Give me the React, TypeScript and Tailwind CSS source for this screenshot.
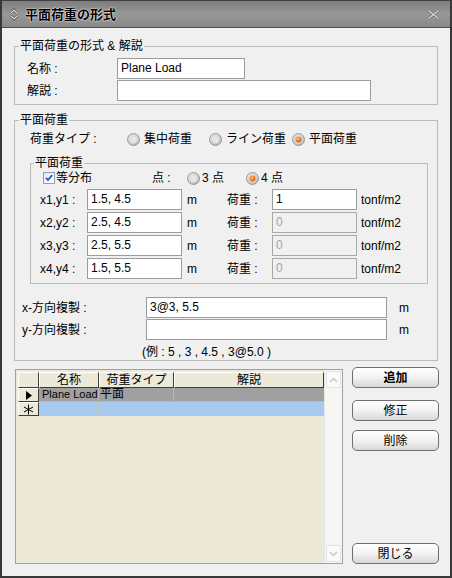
import React from 'react';

const Radio = ({ checked }: { checked?: boolean }) => (
  <svg width="13" height="13" viewBox="0 0 13 13" className="shrink-0">
    <defs>
      <radialGradient id="rbg" cx="0.4" cy="0.35" r="0.7">
        <stop offset="0" stopColor="#f4f4f4" />
        <stop offset="0.6" stopColor="#d6d6d6" />
        <stop offset="1" stopColor="#a9a9a9" />
      </radialGradient>
      <radialGradient id="rdot" cx="0.4" cy="0.35" r="0.7">
        <stop offset="0" stopColor="#ffc080" />
        <stop offset="0.6" stopColor="#f47a22" />
        <stop offset="1" stopColor="#d04a00" />
      </radialGradient>
    </defs>
    <circle cx="6.5" cy="6.5" r="6" fill="url(#rbg)" stroke="#9a9a9a" strokeWidth="1" />
    <circle cx="6.5" cy="6.5" r="4" fill="#e6e6e6" stroke="#c4c4c4" strokeWidth="0.6" />
    {checked && <circle cx="6.5" cy="6.5" r="3" fill="url(#rdot)" />}
  </svg>
);

const Checkbox = () => (
  <svg width="12" height="12" viewBox="0 0 12 12" className="shrink-0">
    <defs>
      <linearGradient id="cbg" x1="0" y1="0" x2="1" y2="1">
        <stop offset="0" stopColor="#dfe6ee" />
        <stop offset="1" stopColor="#ffffff" />
      </linearGradient>
    </defs>
    <rect x="0.5" y="0.5" width="11" height="11" fill="url(#cbg)" stroke="#8a9fb8" />
    <path d="M3 5.8 L5 8 L9.2 3.2" fill="none" stroke="#2a52be" strokeWidth="1.8" />
  </svg>
);

const Field = ({ className, value, disabled }: { className: string; value?: string; disabled?: boolean }) => (
  <div
    className={
      'h-[21px] shrink-0 border pl-[3px] leading-[19px] text-[12px] whitespace-nowrap overflow-hidden ' +
      (disabled ? 'bg-[#f0f0f0] border-[#a8a8a8] text-[#a3a3a3] ' : 'bg-white border-[#9c9c9c] text-black ') +
      className
    }
  >
    {value}
  </div>
);

const Btn = ({ label, bold, className }: { label: string; bold?: boolean; className?: string }) => (
  <div
    className={
      'h-[21px] w-[87px] rounded-[5px] border border-[#6f6f6f] bg-gradient-to-b from-[#ffffff] via-[#f2f2f2] to-[#d8d8d8] flex items-center justify-center text-[12px] leading-none ' +
      (bold ? 'font-bold ' : '') +
      (className || '')
    }
  >
    {label}
  </div>
);

const rows = [
  { l: 'x1,y1 :', v: '1.5, 4.5', w: '1', en: true },
  { l: 'x2,y2 :', v: '2.5, 4.5', w: '0', en: false },
  { l: 'x3,y3 :', v: '2.5, 5.5', w: '0', en: false },
  { l: 'x4,y4 :', v: '1.5, 5.5', w: '0', en: false },
];

const hcell =
  'h-full flex items-center justify-center border-t border-l border-r border-b border-t-white border-l-white border-r-[#3c3c3c] border-b-[#3c3c3c] bg-[#ece9d8] leading-none';

export default function App() {
  return (
    <div className="w-[452px] h-[578px] flex flex-col bg-[#f0f0f0] border-x-2 border-b-2 border-[#383838] [font-family:'Liberation_Sans','Noto_Sans_CJK_JP',sans-serif] text-[12px] text-black overflow-hidden">
      {/* Title bar */}
      <div className="h-[28px] shrink-0 flex items-center border-t border-b border-t-[#404040] border-b-[#505050] bg-gradient-to-b from-[#7e7e7e] via-[#979797] to-[#8a8a8a] pl-[8px] pr-[10px]">
        <svg width="8" height="13" viewBox="0 0 8 13">
          <path d="M1 5 L4 2 L7 5" fill="none" stroke="#3a3a3a" strokeWidth="2.4" />
          <path d="M1 5 L4 2 L7 5" fill="none" stroke="#e8e8e8" strokeWidth="1.2" />
          <path d="M1 8 L4 11 L7 8" fill="none" stroke="#3a3a3a" strokeWidth="2.4" />
          <path d="M1 8 L4 11 L7 8" fill="none" stroke="#e8e8e8" strokeWidth="1.2" />
        </svg>
        <span className="ml-[7px] text-[13px] font-bold text-black leading-none [text-shadow:0_0_2px_#ffffff,0_0_1px_#ffffff]">
          平面荷重の形式
        </span>
        <svg className="ml-auto" width="13" height="11" viewBox="0 0 13 11">
          <path d="M1.5 1.5 L11.5 9.5 M11.5 1.5 L1.5 9.5" stroke="#6a6a6a" strokeWidth="2.6" />
          <path d="M1.5 1.5 L11.5 9.5 M11.5 1.5 L1.5 9.5" stroke="#d8d8d8" strokeWidth="1.4" />
        </svg>
      </div>

      {/* Content */}
      <div className="flex-1 flex flex-col px-[12px]">
        {/* Group 1 */}
        <fieldset className="mt-[11px] w-[424px] border border-[#bcbcbc]">
          <legend className="ml-[4px] px-[1px] leading-[14px]">平面荷重の形式 &amp; 解説</legend>
          <div className="pl-[12px] pt-[5px] pb-[3px] flex flex-col gap-[1px]">
            <div className="flex items-center h-[21px]">
              <span className="w-[90px] shrink-0">名称 :</span>
              <Field className="w-[128px] [font-size:11px]" value="Plane Load" />
            </div>
            <div className="flex items-center h-[21px]">
              <span className="w-[90px] shrink-0">解説 :</span>
              <Field className="w-[254px]" />
            </div>
          </div>
        </fieldset>

        {/* Group 2 */}
        <fieldset className="mt-[8px] w-[424px] border border-[#bcbcbc]">
          <legend className="ml-[4px] px-[1px] leading-[14px]">平面荷重</legend>
          <div className="pl-[7px] pt-[2px] pb-[1px] flex flex-col">
            <div className="pl-[8px] h-[20px] flex items-center">
              <span className="w-[97px] shrink-0">荷重タイプ :</span>
              <div className="w-[82px] flex items-center gap-[4px]">
                <Radio />
                <span>集中荷重</span>
              </div>
              <div className="w-[83px] flex items-center gap-[4px]">
                <Radio />
                <span>ライン荷重</span>
              </div>
              <div className="flex items-center gap-[4px]">
                <Radio checked />
                <span>平面荷重</span>
              </div>
            </div>

            {/* Inner group */}
            <fieldset className="ml-[8px] mt-[7px] w-[398px] border border-[#bcbcbc]">
              <legend className="ml-[3px] px-[1px] leading-[14px]">平面荷重</legend>
              <div className="pl-[9px] pb-[4px] flex flex-col">
                <div className="h-[16px] flex items-center">
                  <div className="ml-[3px] w-[109px] flex items-center gap-[1px]">
                    <Checkbox />
                    <span>等分布</span>
                  </div>
                  <span className="w-[35px]">点 :</span>
                  <div className="w-[59px] flex items-center gap-[2px]">
                    <Radio />
                    <span>3 点</span>
                  </div>
                  <div className="flex items-center gap-[2px]">
                    <Radio checked />
                    <span>4 点</span>
                  </div>
                </div>
                <div className="mt-[3px] flex flex-col gap-[2px]">
                  {rows.map((r) => (
                    <div key={r.l} className="h-[21px] flex items-center">
                      <span className="w-[47px] shrink-0">{r.l}</span>
                      <Field className="w-[95px] pl-[2px]" value={r.v} />
                      <span className="w-[45px] shrink-0 pl-[5px]">m</span>
                      <span className="w-[45px] shrink-0">荷重 :</span>
                      <Field className="w-[85px] pl-[2px]" value={r.w} disabled={!r.en} />
                      <span className="pl-[4px]">tonf/m2</span>
                    </div>
                  ))}
                </div>
              </div>
            </fieldset>

            <div className="mt-[13px] flex flex-col gap-[1px]">
              <div className="h-[21px] flex items-center">
                <span className="w-[124px] shrink-0">x-方向複製 :</span>
                <Field className="w-[241px] pl-[2px]" value="3@3, 5.5" />
                <span className="pl-[12px]">m</span>
              </div>
              <div className="h-[21px] flex items-center">
                <span className="w-[124px] shrink-0">y-方向複製 :</span>
                <Field className="w-[241px]" />
                <span className="pl-[12px]">m</span>
              </div>
            </div>
            <div className="mt-[5px] pl-[120px] leading-[14px]">(例 : 5 , 3 , 4.5 , 3@5.0 )</div>
          </div>
        </fieldset>

        {/* Bottom: grid + buttons */}
        <div className="mt-[6px] flex items-start">
          <div className="ml-[1px] mt-[2px] w-[329px] h-[195px] border border-[#a0a0a0] bg-[#ece9d8] flex">
            <div className="pl-[2px] pt-[2px] flex flex-col">
              {/* header */}
              <div className="flex h-[16px]">
                <div className={hcell + ' w-[21px]'} />
                <div className={hcell + ' w-[60px]'}>名称</div>
                <div className={hcell + ' w-[75px]'}>荷重タイプ</div>
                <div className={hcell + ' w-[150px]'}>解説</div>
              </div>
              {/* row 1 */}
              <div className="flex h-[14px]">
                <div className={hcell + ' w-[21px]'}>
                  <svg width="7" height="9" viewBox="0 0 7 9">
                    <path d="M1 0 L7 4.5 L1 9 Z" fill="#000" />
                  </svg>
                </div>
                <div className="w-[60px] h-full bg-[#a0a0a0] border-r border-b border-[#b8b8b8] pl-[3px] leading-[13px] text-[11px] whitespace-nowrap overflow-hidden">
                  Plane Load
                </div>
                <div className="w-[75px] h-full bg-[#a0a0a0] border-r border-b border-[#b8b8b8] pl-[1px] leading-[13px]">
                  平面
                </div>
                <div className="w-[150px] h-full bg-[#a0a0a0] border-b border-[#b8b8b8]" />
              </div>
              {/* row 2 */}
              <div className="flex h-[14px]">
                <div className={hcell + ' w-[21px]'}>
                  <svg width="11" height="11" viewBox="0 0 11 11">
                    <path d="M5.5 0.5 V10.5 M1 3 L10 8 M10 3 L1 8" stroke="#000" strokeWidth="1" />
                  </svg>
                </div>
                <div className="w-[60px] h-full bg-[#a6caf0] border-r border-b border-[#c4c4b0]" />
                <div className="w-[75px] h-full bg-[#a6caf0] border-r border-b border-[#c4c4b0]" />
                <div className="w-[150px] h-full bg-[#a6caf0] border-b border-[#c4c4b0]" />
              </div>
            </div>
            {/* scrollbar */}
            <div className="ml-auto w-[18px] h-full bg-[#f6f6f4] border-l border-[#e6e6e6] flex flex-col justify-between py-[1px]">
              <div className="h-[17px] mx-[1px] rounded-[2px] border border-[#e2e2e2] bg-[#fafafa] flex items-center justify-center">
                <svg width="9" height="6" viewBox="0 0 9 6">
                  <path d="M1 5 L4.5 1.5 L8 5" fill="none" stroke="#c6c6c6" strokeWidth="1.5" />
                </svg>
              </div>
              <div className="h-[17px] mx-[1px] rounded-[2px] border border-[#e2e2e2] bg-[#fafafa] flex items-center justify-center">
                <svg width="9" height="6" viewBox="0 0 9 6">
                  <path d="M1 1 L4.5 4.5 L8 1" fill="none" stroke="#c6c6c6" strokeWidth="1.5" />
                </svg>
              </div>
            </div>
          </div>

          <div className="ml-[9px] w-[87px] h-[197px] flex flex-col">
            <Btn label="追加" bold />
            <Btn label="修正" className="mt-[12px]" />
            <Btn label="削除" className="mt-[9px]" />
            <Btn label="閉じる" className="mt-auto" />
          </div>
        </div>
      </div>
    </div>
  );
}
